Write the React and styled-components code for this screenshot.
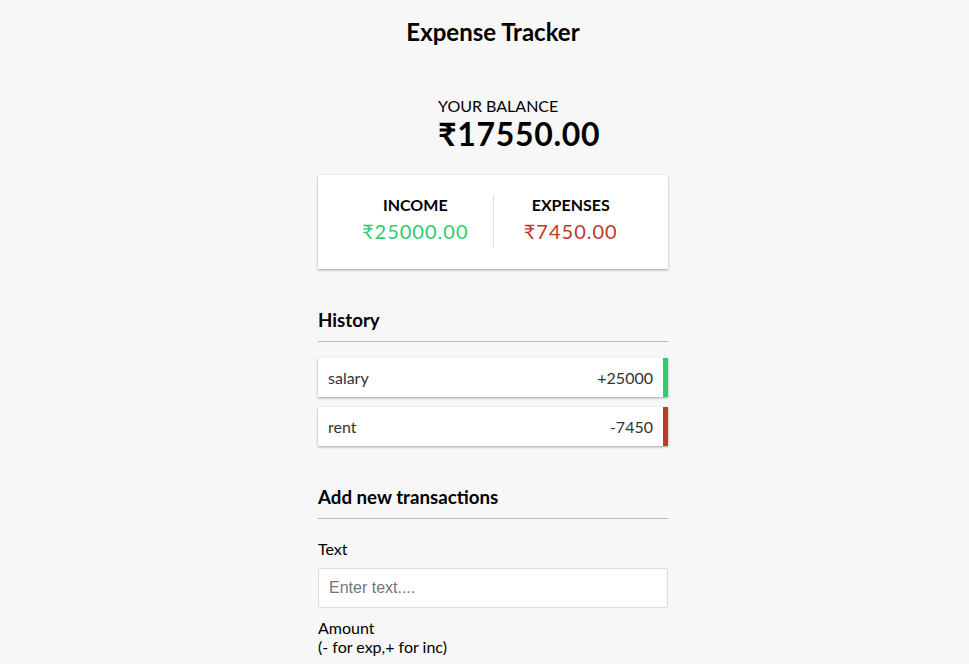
import React from 'react'
import styled, { createGlobalStyle } from 'styled-components'

const GlobalStyle = createGlobalStyle`
  * { box-sizing: border-box; }
  html, body { overflow: hidden; }
  body {
    margin: 0;
    background-color: #f7f7f7;
    font-family: Lato, "Noto Sans", sans-serif;
    color: #000;
  }
`

const shadow = '0 1px 3px rgba(0,0,0,0.12), 0 1px 2px rgba(0,0,0,0.24)'

const Page = styled.div`
  display: flex;
  flex-direction: column;
  align-items: center;
  padding-left: 17px;
`

const Title = styled.h2`
  font-size: 24px;
  font-weight: 700;
  line-height: 29px;
  margin: 17px 0 50px;
`

const Container = styled.div`
  width: 350px;
`

const Balance = styled.div`
  padding-left: 120px;
`

const Label4 = styled.h4`
  margin: 0;
  font-size: 16px;
  line-height: 19px;
  text-transform: uppercase;
  font-weight: ${({ $light }) => ($light ? 400 : 700)};
`

const Amount = styled.h1`
  margin: 0;
  font-size: 32px;
  line-height: 38px;
  font-weight: 700;
  letter-spacing: 0.7px;
`

const IncExp = styled.div`
  background: #fff;
  box-shadow: ${shadow};
  padding: 20px 20px 21px;
  display: flex;
  margin: 22px 0;

  & > div {
    flex: 1;
    text-align: center;
  }
  & > div:first-of-type {
    border-right: 1px solid #dedede;
  }
`

const Money = styled.p`
  font-size: 20px;
  line-height: 24px;
  letter-spacing: 1px;
  margin: 5px 0;
  color: ${({ $plus }) => ($plus ? '#2ecc71' : '#c0392b')};
`

const Heading = styled.h3`
  font-size: 18.72px;
  line-height: 22px;
  font-weight: 700;
  border-bottom: 1px solid #bbb;
  padding-bottom: 10px;
  margin: 40px 0 10px;
`

const List = styled.ul`
  list-style: none;
  padding: 0;
  margin: 16px 0 40px;
`

const Item = styled.li`
  background: #fff;
  box-shadow: ${shadow};
  color: #333;
  display: flex;
  justify-content: space-between;
  padding: 10px;
  margin: 10px 0;
  font-size: 16px;
  line-height: 19px;
  border-right: 5px solid ${({ $plus }) => ($plus ? '#2ecc71' : '#c0392b')};
`

const Field = styled.div``

const Label = styled.label`
  display: inline-block;
  margin: 10px 0;
  font-size: 16px;
  line-height: 19px;
`

const Input = styled.input`
  display: block;
  width: 100%;
  border: 1px solid #dedede;
  border-radius: 2px;
  font-size: 16px;
  font-family: "Liberation Sans", Arial, sans-serif;
  padding: 10px;
  height: 40px;
  background: #fff;
  &::placeholder { color: #757575; }
`

const Button = styled.button`
  cursor: pointer;
  background-color: #9c88ff;
  box-shadow: ${shadow};
  color: #fff;
  border: 0;
  display: block;
  font-size: 16px;
  margin: 10px 0 30px;
  padding: 10px;
  width: 100%;
  font-family: inherit;
`

const history = [
  { text: 'salary', amount: '+25000', plus: true },
  { text: 'rent', amount: '-7450', plus: false },
]

export default function App() {
  return (
    <>
      <GlobalStyle />
      <Page>
        <Title>Expense Tracker</Title>
        <Container>
          <Balance>
            <Label4 $light>Your Balance</Label4>
            <Amount>₹17550.00</Amount>
          </Balance>

          <IncExp>
            <div>
              <Label4>Income</Label4>
              <Money $plus>₹25000.00</Money>
            </div>
            <div>
              <Label4>Expenses</Label4>
              <Money>₹7450.00</Money>
            </div>
          </IncExp>

          <Heading>History</Heading>
          <List>
            {history.map((h) => (
              <Item key={h.text} $plus={h.plus}>
                <span>{h.text}</span>
                <span>{h.amount}</span>
              </Item>
            ))}
          </List>

          <Heading>Add new transactions</Heading>
          <form onSubmit={(e) => e.preventDefault()}>
            <Field>
              <Label htmlFor="text">Text</Label>
              <Input type="text" id="text" placeholder="Enter text...." />
            </Field>
            <Field>
              <Label htmlFor="amount">
                Amount <br />
                (- for exp,+ for inc)
              </Label>
              <Input type="number" id="amount" placeholder="Enter amount...." />
            </Field>
            <Button>Add transaction</Button>
          </form>
        </Container>
      </Page>
    </>
  )
}
